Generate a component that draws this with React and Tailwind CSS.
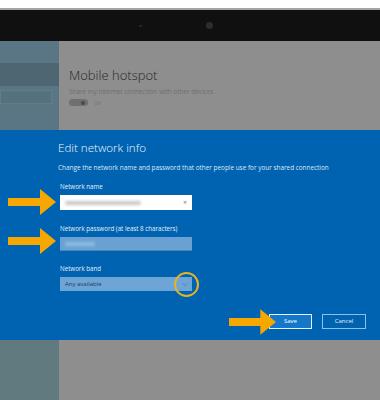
import React from 'react';

const Arrow = ({ className }) => (
  <svg className={className} viewBox="0 0 48 26" fill="#f6a800">
    <path d="M0 9 H32 V0 L48 13 L32 26 V17 H0 Z" />
  </svg>
);

const Blur = ({ className }) => <div className={`rounded-sm blur-[1.5px] ${className}`} />;

export default function App() {
  return (
    <div className="relative flex h-[400px] w-[380px] flex-col overflow-hidden bg-white font-['Open_Sans',sans-serif]">
      {/* device bezel */}
      <div className="h-[8px] bg-white" />
      <div className="h-[2px] bg-[#a3a3a3]" />
      <div className="relative h-[31px] bg-[#101010]">
        <div className="absolute left-[139px] top-[15px] h-[2px] w-[3px] rounded-full bg-[#2a2a2a]" />
        <div className="absolute left-[206px] top-[12px] h-[7px] w-[7px] rounded-full bg-[#2e2e2e]" />
      </div>

      {/* settings page behind dialog */}
      <div className="flex h-[89px]">
        <div className="flex w-[59px] flex-col bg-[#5a7684] pt-[22px]">
          <div className="h-[23px] bg-[#4e6672]" />
          <div className="mt-[4px] h-[14px] w-[52px] border border-[#627d8a] bg-[#56717e]" />
        </div>
        <div className="flex-1 bg-[#8e8e8e] pl-[10px] pt-[26px]">
          <div className="text-[13px] font-light leading-[16px] text-[#262626]">Mobile hotspot</div>
          <div className="mt-[6px] text-[6.4px] leading-[6px] text-[#6e6e6e]">
            Share my Internet connection with other devices
          </div>
          <div className="mt-[4px] flex items-center gap-[6px]">
            <div className="flex h-[7px] w-[19px] items-center justify-end rounded-full bg-[#707070] pr-[3px]">
              <div className="h-[4px] w-[4px] rounded-full bg-[#4a4a4a]" />
            </div>
            <span className="text-[5px] leading-[6px] text-[#727272]">On</span>
          </div>
        </div>
      </div>

      {/* dialog */}
      <div className="relative h-[210px] bg-[#0063b1] pl-[58px] pt-[10px] text-white">
        <div className="text-[11.6px] font-light leading-[16px] text-[#f2f7fc]">Edit network info</div>
        <div className="mt-[8px] text-[6.4px] leading-[8px] text-[#dbe8f5]">
          Change the network name and password that other people use for your shared connection
        </div>

        <div className="ml-[2px]">
          <div className="mt-[11px] text-[6.2px] leading-[8px] text-[#e6eff8]">Network name</div>
          <div className="mt-[4px] flex h-[15px] w-[132px] items-center justify-between bg-white px-[5px]">
            <Blur className="h-[4px] w-[76px] bg-[#c8c8c8]" />
            <span className="text-[7px] leading-none text-[#777]">×</span>
          </div>

          <div className="mt-[15px] text-[6.2px] leading-[8px] text-[#e6eff8]">
            Network password (at least 8 characters)
          </div>
          <div className="mt-[4px] flex h-[14px] w-[132px] items-center border-b border-[#4c86b8] bg-[#69a2d2] px-[5px]">
            <Blur className="h-[4px] w-[30px] bg-[#8fbde3]" />
          </div>

          <div className="mt-[14px] text-[6.2px] leading-[8px] text-[#e6eff8]">Network band</div>
          <div className="mt-[4px] flex h-[14px] w-[132px] items-center justify-between bg-[#6ea5d6] pl-[5px] pr-[4px]">
            <span className="text-[6px] leading-none text-[#1d3c5c]">Any available</span>
            <svg className="h-[5px] w-[6px]" viewBox="0 0 10 6" fill="none" stroke="#4f7ca6" strokeWidth="1.4">
              <path d="M1 1 L5 5 L9 1" />
            </svg>
          </div>
        </div>

        <div className="mt-[23px] flex justify-end gap-[10px] pr-[14px]">
          <div className="flex h-[15px] w-[43px] items-center justify-center border border-[#e9f2fb] bg-[#1477c9] text-[6px] text-white">
            Save
          </div>
          <div className="flex h-[15px] w-[44px] items-center justify-center border border-[#8cc0ea] text-[6px] text-[#e6eff8]">
            Cancel
          </div>
        </div>

        {/* callouts */}
        <Arrow className="absolute left-[8px] top-[59px] h-[26px] w-[48px]" />
        <Arrow className="absolute left-[8px] top-[98px] h-[26px] w-[48px]" />
        <Arrow className="absolute left-[229px] top-[179px] h-[26px] w-[47px]" />
        <div className="absolute left-[174px] top-[142px] h-[25px] w-[25px] rounded-full border-2 border-[#e6b422]" />
      </div>

      {/* lower page */}
      <div className="flex flex-1">
        <div className="w-[59px] bg-[#607a80]" />
        <div className="flex-1 bg-[#8e8e8e]" />
      </div>
    </div>
  );
}
